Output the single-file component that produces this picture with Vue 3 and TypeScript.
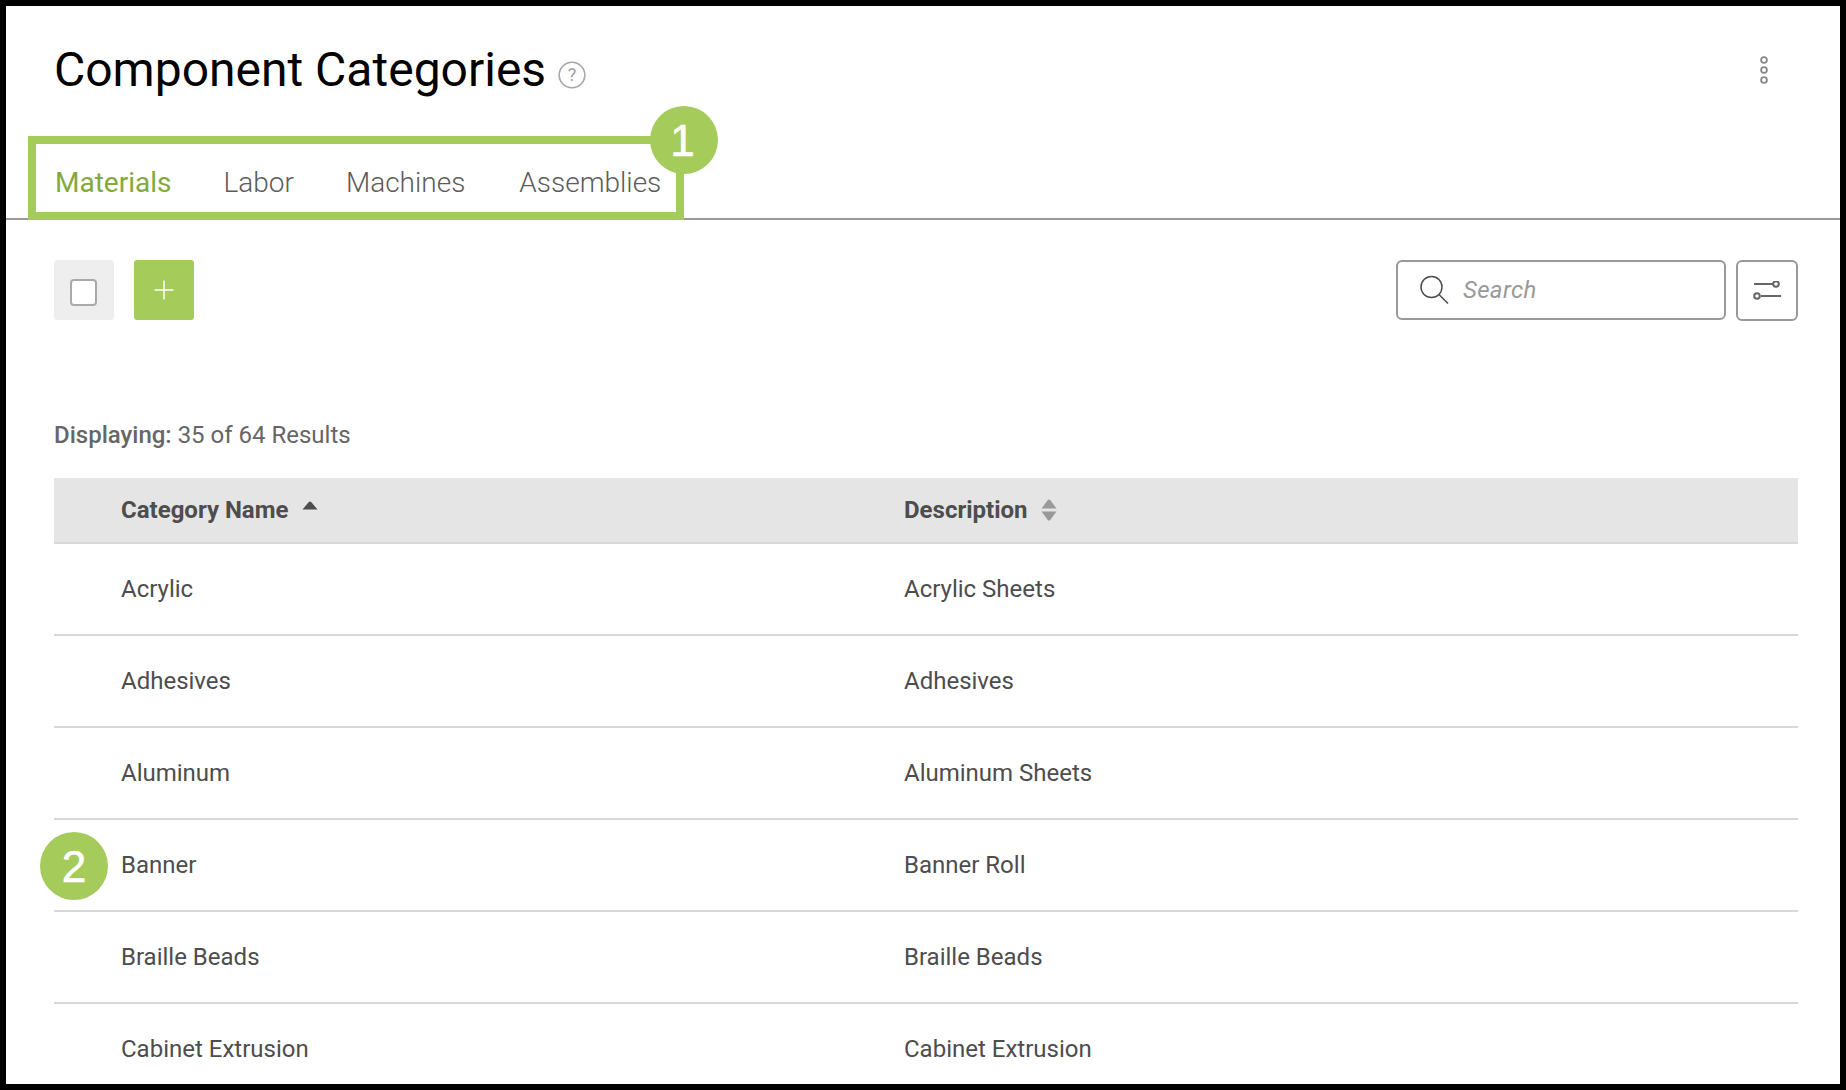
<script setup lang="ts">
const tabs: string[] = ['Materials', 'Labor', 'Machines', 'Assemblies']
const rows: [string, string][] = [
  ['Acrylic', 'Acrylic Sheets'],
  ['Adhesives', 'Adhesives'],
  ['Aluminum', 'Aluminum Sheets'],
  ['Banner', 'Banner Roll'],
  ['Braille Beads', 'Braille Beads'],
  ['Cabinet Extrusion', 'Cabinet Extrusion'],
]
</script>

<template>
  <div class="frame">
    <header class="head">
      <h1 class="title">Component Categories</h1>
      <svg class="help" width="28" height="28" viewBox="0 0 28 28" fill="none">
        <circle cx="14" cy="14" r="12.8" stroke="#a6a6a6" stroke-width="1.6" />
        <text x="14" y="20" text-anchor="middle" class="help-q">?</text>
      </svg>
      <svg class="more" width="10" height="30" viewBox="0 0 10 30" fill="none" stroke="#888" stroke-width="1.8">
        <circle cx="5" cy="5" r="2.9" />
        <circle cx="5" cy="15" r="2.9" />
        <circle cx="5" cy="25" r="2.9" />
      </svg>
    </header>

    <nav class="tabs">
      <span v-for="(t, i) in tabs" :key="t" class="tab" :class="{ active: i === 0 }">{{ t }}</span>
    </nav>

    <section class="toolbar">
      <div class="btn check-btn"><span class="check"></span></div>
      <div class="btn add-btn">
        <svg width="20" height="20" viewBox="0 0 20 20" stroke="#fff" stroke-width="1.5">
          <path d="M10 0.5V19.5M0.5 10H19.5" />
        </svg>
      </div>
      <div class="search">
        <svg width="32" height="32" viewBox="0 0 32 32" fill="none" stroke="#4d4d4d" stroke-width="1.5">
          <circle cx="13.5" cy="13" r="10.5" />
          <path d="M21 20.5L30 29.5" />
        </svg>
        <span class="placeholder">Search</span>
      </div>
      <div class="filter">
        <svg width="28" height="20" viewBox="0 0 28 20" fill="none" stroke="#666" stroke-width="2">
          <path d="M1 3H20M8 15H28" />
          <circle cx="23" cy="3" r="2.8" />
          <circle cx="4" cy="15" r="2.8" />
        </svg>
      </div>
    </section>

    <p class="count"><b>Displaying:</b> 35 of 64 Results</p>

    <div class="table">
      <div class="row thead">
        <div class="cell">
          Category Name
          <svg class="sort-up" width="16" height="9" viewBox="0 0 16 9"><path d="M6.8 1Q8 0 9.2 1L15.5 8.5H0.5Z" fill="#4d4d4d" /></svg>
        </div>
        <div class="cell">
          Description
          <svg class="sort-both" width="16" height="22" viewBox="0 0 16 22" fill="#999">
            <path d="M6.8 1Q8 0 9.2 1L15.5 9.5H0.5Z" />
            <path d="M6.8 21Q8 22 9.2 21L15.5 12.5H0.5Z" />
          </svg>
        </div>
      </div>
      <div v-for="r in rows" :key="r[0]" class="row">
        <div class="cell">{{ r[0] }}</div>
        <div class="cell">{{ r[1] }}</div>
      </div>
    </div>

    <div class="highlight"></div>
    <div class="badge badge-1"><span class="digit-1">1</span></div>
    <div class="badge badge-2">2</div>
  </div>
</template>

<style>
html, body { margin: 0; background: #000; }
</style>

<style scoped>
.frame {
  position: relative;
  box-sizing: border-box;
  width: 1846px;
  height: 1090px;
  border: 6px solid #000;
  background: #fff;
  overflow: hidden;
  font-family: Roboto, "Liberation Sans", sans-serif;
  color: #4d4d4d;
}
.head {
  display: flex;
  align-items: center;
  height: 126px;
  padding: 0 71px 0 48px;
}
.title {
  margin: 2px 0 0;
  font-size: 48px;
  font-weight: 400;
  line-height: 56px;
  color: #000;
  white-space: nowrap;
}
.help { margin: 12px 0 0 12px; }
.help-q { font: 400 18px Roboto, sans-serif; fill: #a0a0a0; }
.more { margin-left: auto; margin-top: 1px; }
.tabs {
  display: flex;
  align-items: center;
  height: 88px;
  padding: 14px 0 0 49px;
  box-sizing: border-box;
  border-bottom: 2px solid #999;
  font-size: 28px;
  gap: 52px;
}
.tab { font-weight: 300; color: #5c5c5c; }
.tab:last-child { margin-left: 2px; }
.tab.active { color: #85a83b; font-weight: 400; }
.toolbar {
  display: flex;
  align-items: flex-start;
  height: 61px;
  padding: 40px 42px 0 48px;
}
.btn {
  display: flex;
  align-items: center;
  justify-content: center;
  width: 60px;
  height: 60px;
  border-radius: 3px;
}
.check-btn { background: #eee; }
.check {
  box-sizing: border-box;
  width: 27px;
  height: 27px;
  margin: 5px 1px 0 0;
  background: #fff;
  border: 2px solid #aaa;
  border-radius: 4px;
}
.add-btn { background: #a5cb5a; margin-left: 20px; }
.search {
  box-sizing: border-box;
  display: flex;
  align-items: center;
  gap: 13px;
  width: 330px;
  height: 60px;
  margin-left: auto;
  padding-left: 20px;
  border: 2px solid #999;
  border-radius: 6px;
}
.placeholder { font-size: 24px; font-style: italic; color: #999; letter-spacing: 0.35px; }
.filter {
  box-sizing: border-box;
  display: flex;
  align-items: center;
  justify-content: center;
  width: 62px;
  height: 61px;
  margin-left: 10px;
  border: 2px solid #999;
  border-radius: 6px;
}
.count {
  margin: 0;
  padding: 100px 0 0 48px;
  font-size: 24px;
  line-height: 28px;
  color: #666;
}
.count b { font-weight: 500; }
.table { margin: 29px 42px 0 48px; }
.row {
  box-sizing: border-box;
  display: grid;
  grid-template-columns: 783px 1fr;
  align-items: center;
  height: 92px;
  padding-left: 67px;
  border-bottom: 2px solid #d8d8d8;
  font-size: 24px;
}
.thead {
  height: 66px;
  background: #e5e5e5;
  font-weight: 700;
}
.thead .cell { display: flex; align-items: center; }
.sort-up { margin: -10px 0 0 14px; }
.sort-both { margin-left: 13px; }
.highlight {
  position: absolute;
  left: 22px;
  top: 130px;
  width: 656px;
  height: 84px;
  box-sizing: border-box;
  border: 8px solid #a5cb5a;
}
.badge {
  position: absolute;
  width: 68px;
  height: 68px;
  border-radius: 50%;
  background: #a5cb5a;
  color: #fff;
  font-family: "Liberation Sans", Arial, sans-serif;
  font-size: 44px;
  line-height: 70px;
  text-align: center;
  -webkit-text-stroke: 0.6px #fff;
}
.digit-1 { margin-right: 3px; }
.badge-1 { left: 644px; top: 100px; }
.badge-2 { left: 34px; top: 826px; }
</style>
